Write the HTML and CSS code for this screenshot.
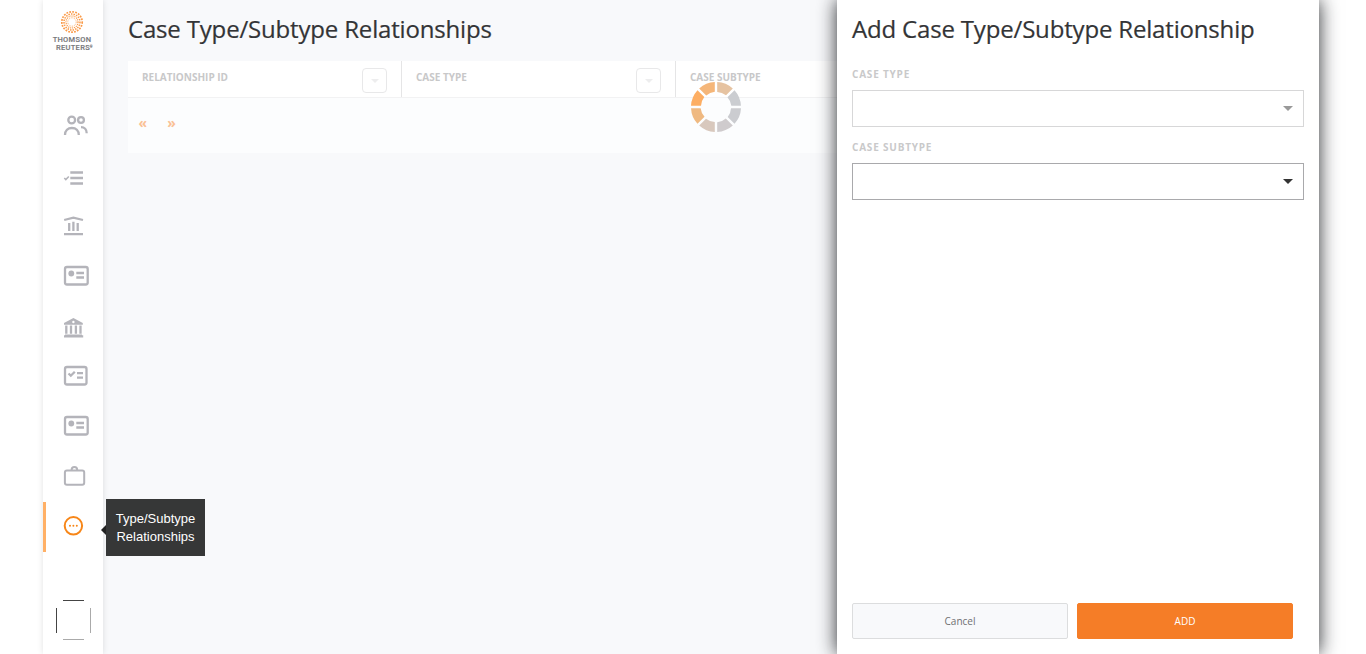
FILE: index.html
```html
<!DOCTYPE html>
<html lang="en">
<head>
<meta charset="utf-8">
<title>Case Type/Subtype Relationships</title>
<link rel="stylesheet" href="styles.css">
</head>
<body>
<div class="app">
  <aside class="sidebar">
    <div class="logo">
      <svg class="logo-mark" viewBox="-12 -12 24 24" fill="none" stroke="#fa9a48">
        <circle r="10.2" stroke-width="1.7" stroke-dasharray="1.8 1.200"/>
        <circle r="8" stroke-width="1.5" stroke-dasharray="1.5 1.100"/>
        <circle r="6" stroke-width="1.2" stroke-dasharray="1.1 .9"/>
        <circle r="4.200" stroke-width=".8" stroke-dasharray=".9 .9"/>
      </svg>
      <div class="logo-text">THOMSON<br><span class="logo-second">REUTERS<sup>®</sup></span></div>
    </div>
    <nav class="nav">
      <a class="nav-item"><svg viewBox="0 0 60 50"><circle cx="28.7" cy="18" r="3.4"/><circle cx="38" cy="18" r="2.9"/><path d="M22 33c0-4.5 2.800-7 6.900-7s6.900 2.500 6.900 7M38 25.200c3.500 0 5.700 2.500 5.700 6"/></svg></a>
      <a class="nav-item"><svg viewBox="0 0 60 50"><path d="M27.300 20.500H40M27.300 26H40M27.300 31.500H40"/><path class="thin" d="M21.300 26l1.500 1.500 3-3"/></svg></a>
      <a class="nav-item"><svg viewBox="0 0 60 50"><path d="M21.200 18l9.200-2.300L40 18M26.200 21v8M30.400 19.800V29M34.700 21v8M21 32.200h19"/></svg></a>
      <a class="nav-item"><svg viewBox="0 0 60 50"><rect x="22" y="15" width="22.700" height="17.500" rx="2"/><circle class="solid" cx="28.300" cy="21.500" r="2.900"/><path d="M33.300 21H41M33.300 25.500H41"/></svg></a>
      <a class="nav-item"><svg viewBox="0 0 60 50"><path class="solid" fill-rule="evenodd" d="M30.400 16l9.400 5v1.700H21V21zM30.400 18.800a1.200 1.200 0 1 0 0 2.400 1.200 1.200 0 0 0 0-2.400z"/><path class="solid" d="M22 32.500h17v.8h1.200v2.200H21v-2.200h1z"/><path d="M23.300 23.500v8.300M28 23.500v8.300M32.900 23.500v8.300M37.500 23.500v8.300"/></svg></a>
      <a class="nav-item"><svg viewBox="0 0 60 50"><rect x="22" y="15" width="21.500" height="17.500" rx="2"/><path d="M25.500 21.500l2.300 2.200 4-4M34 21.200h6M34 25.700h6"/></svg></a>
      <a class="nav-item"><svg viewBox="0 0 60 50"><rect x="22" y="15" width="22.700" height="17.500" rx="2"/><circle class="solid" cx="28.300" cy="21.500" r="2.900"/><path d="M33.300 21H41M33.300 25.500H41"/></svg></a>
      <a class="nav-item"><svg viewBox="0 0 60 50"><rect class="medium" x="21.900" y="18.500" width="19.300" height="14.300" rx="2"/><path class="medium" d="M28.600 18c0-2 1-3 2.800-3s2.800 1 2.800 3"/></svg></a>
      <a class="nav-item active"><svg viewBox="0 0 60 50"><circle class="medium" cx="30.400" cy="23.800" r="8.700"/><g class="solid"><circle cx="27" cy="23.800" r="1"/><circle cx="30.400" cy="23.800" r="1"/><circle cx="33.800" cy="23.800" r="1"/></g></svg><span class="tooltip">Type/Subtype Relationships</span></a>
    </nav>
    <svg class="avatar" viewBox="0 0 36 41" fill="none">
      <path stroke="#444" d="M7 .5h21M.5 8v25"/>
      <path stroke="#aaa" d="M34.500 8v25M7 39.500h21"/>
    </svg>
  </aside>
  <main class="content">
    <h1 class="title">Case Type/Subtype Relationships</h1>
    <section class="table">
      <div class="table-head">
        <div class="column"><span>RELATIONSHIP ID</span><button class="filter"><i class="caret"></i></button></div>
        <div class="column"><span>CASE TYPE</span><button class="filter"><i class="caret"></i></button></div>
        <div class="column last"><span>CASE SUBTYPE</span></div>
      </div>
      <div class="pager"><span>«</span><span>»</span></div>
    </section>
    <svg class="spinner" viewBox="-25 -25 50 50">
      <defs><path id="segment" d="M1.200-25A25 25 0 0 1 16.800-18.500L10-11.700A15 15 0 0 0 1.200-15z"/></defs>
      <use href="#segment" fill="#e6c3a1"/>
      <use href="#segment" fill="#cbcdd1" transform="rotate(45)"/>
      <use href="#segment" fill="#cbccd0" transform="rotate(90)"/>
      <use href="#segment" fill="#cfcbcd" transform="rotate(135)"/>
      <use href="#segment" fill="#d8c8bd" transform="rotate(180)"/>
      <use href="#segment" fill="#efb981" transform="rotate(225)"/>
      <use href="#segment" fill="#fdae63" transform="rotate(270)"/>
      <use href="#segment" fill="#f5b679" transform="rotate(315)"/>
    </svg>
  </main>
  <section class="panel">
    <h2 class="title">Add Case Type/Subtype Relationship</h2>
    <label class="label">CASE TYPE</label>
    <div class="select disabled"><i class="caret"></i></div>
    <label class="label">CASE SUBTYPE</label>
    <div class="select"><i class="caret"></i></div>
    <div class="actions">
      <button class="button">Cancel</button>
      <button class="button primary">ADD</button>
    </div>
  </section>
</div>
</body>
</html>
```
FILE: styles.css
```css
* { box-sizing: border-box; }
body { margin: 0; background: #fff; overflow: hidden; font-family: "Open Sans", "Noto Sans", sans-serif; }
.app { position: relative; display: flex; width: 1276px; height: 654px; margin-left: 43px; background: #f8f9fb; }
.sidebar { position: relative; z-index: 2; display: flex; flex-direction: column; width: 60px; flex: none; background: #fff; box-shadow: 0 0 6px rgba(0, 0, 0, .12); }
.logo { display: flex; flex-direction: column; align-items: center; height: 102px; padding-top: 10px; }
.logo-mark { width: 24px; height: 24px; flex: none; margin-right: 2px; }
.logo-text { margin: 2px 2px 0 0; font: 500 7.5px/8px Roboto, sans-serif; letter-spacing: .3px; color: #77787b; -webkit-text-stroke: .15px #77787b; text-align: right; white-space: nowrap; }
.logo-second { margin-right: -1px; }
.logo-text sup { font-size: 3px; line-height: 0; letter-spacing: 0; vertical-align: 2px; }
.nav-item { position: relative; display: block; height: 50px; }
.nav-item svg { display: block; width: 60px; height: 50px; fill: none; stroke: #b4b4ba; stroke-width: 2.3; }
.nav-item .thin { stroke-width: 1.6; }
.nav-item .medium { stroke-width: 2; }
.nav-item .solid { fill: #b4b4ba; stroke: none; }
.nav-item.active { box-shadow: inset 3px 0 #ffb066; }
.nav-item.active svg { stroke: #f78618; }
.nav-item.active .solid { fill: #f78618; }
.tooltip { position: absolute; left: 63px; top: -3px; width: 99px; height: 57px; padding: 11px 9px 0; background: #363737; color: #fff; font: 13px/18px "Liberation Sans", Arial, sans-serif; text-align: center; }
.tooltip::before { content: ""; position: absolute; left: -5px; top: 26px; border: 5px solid transparent; border-left: 0; border-right-color: #222; }
.avatar { width: 36px; height: 41px; margin: 48px 0 0 13px; }
.content { position: relative; flex: 1; min-width: 0; padding: 12px 16px 0 25px; }
.title { margin: 0; height: 34px; font-size: 24px; line-height: 34px; font-weight: 400; letter-spacing: -.175px; color: #333436; -webkit-text-stroke: .2px #333436; white-space: nowrap; }
.table { height: 92px; margin-top: 15px; background: #fcfdfe; font-size: 10px; font-weight: 700; color: #c8c8c9; }
.table-head { display: flex; height: 37px; background: #fff; border-bottom: 1px solid #f2f2f3; }
.column { display: flex; justify-content: space-between; width: 274px; padding: 7px 14px 0; border-right: 1px solid #e5e5e6; line-height: 19px; }
.column.last { flex: 1; border: 0; }
.filter { display: flex; align-items: center; justify-content: center; width: 25px; height: 25px; padding: 0; border: 1px solid #e8e8e9; border-radius: 4px; background: #fff; }
.caret { width: 0; height: 0; border: 5px solid transparent; border-top-color: #333; border-bottom: 0; }
.filter .caret { border-width: 4px; border-top-color: #ededee; border-bottom: 0; }
.pager { display: flex; gap: 20px; padding: 14px 10.500px; font-size: 14px; line-height: 22px; color: #fac195; }
.spinner { position: absolute; left: 588px; top: 82px; width: 50px; height: 50px; }
.panel { position: absolute; z-index: 3; left: 794px; top: 0; display: flex; flex-direction: column; width: 482px; height: 654px; padding: 12px 15px 15px; background: #fff; box-shadow: 0 0 18px rgba(30, 32, 36, .95); }
.label { height: 14px; margin: 21px 0 9px; font-size: 10px; line-height: 14px; font-weight: 700; letter-spacing: .8px; color: #c9c9ca; }
.select { display: flex; align-items: center; justify-content: flex-end; height: 37px; padding-right: 10px; border: 1px solid #a9a9ac; }
.select.disabled { border-color: #d7d7d8; }
.select.disabled .caret { border-top-color: #999; }
.select + .label { margin-top: 13px; }
.actions { display: flex; gap: 9px; margin-top: auto; }
.button { width: 216px; height: 36px; padding: 0; border: 1px solid #dcddde; border-radius: 2px; background: #f8f9fb; color: #6f7072; font: 10px "Open Sans", sans-serif; }
.button.primary { border-color: #f57d27; background: #f57d27; color: #fff; }
```
